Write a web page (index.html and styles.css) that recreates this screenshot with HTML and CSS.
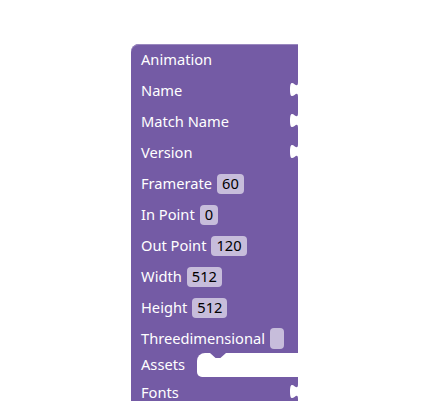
FILE: index.html
```html
<!DOCTYPE html>
<html>
<head>
<meta charset="utf-8">
<link rel="stylesheet" href="styles.css">
</head>
<body>
<div class="block">
  <div class="row"><span class="label">Animation</span></div>
  <div class="row"><span class="label">Name</span><svg class="notch" width="10" height="16" viewBox="0 0 10 16"><path d="M9,0 c0,10 -8,-8 -8,7.5 s8,-2.5 8,7.5 L10,15 L10,0 Z" fill="#fff"/></svg></div>
  <div class="row"><span class="label">Match Name</span><svg class="notch" width="10" height="16" viewBox="0 0 10 16"><path d="M9,0 c0,10 -8,-8 -8,7.5 s8,-2.5 8,7.5 L10,15 L10,0 Z" fill="#fff"/></svg></div>
  <div class="row"><span class="label">Version</span><svg class="notch" width="10" height="16" viewBox="0 0 10 16"><path d="M9,0 c0,10 -8,-8 -8,7.5 s8,-2.5 8,7.5 L10,15 L10,0 Z" fill="#fff"/></svg></div>
  <div class="row"><span class="label">Framerate</span><span class="field">60</span></div>
  <div class="row"><span class="label">In Point</span><span class="field">0</span></div>
  <div class="row"><span class="label">Out Point</span><span class="field">120</span></div>
  <div class="row"><span class="label">Width</span><span class="field">512</span></div>
  <div class="row"><span class="label">Height</span><span class="field">512</span></div>
  <div class="row"><span class="label">Threedimensional</span><span class="check"></span></div>
  <div class="row stmt"><span class="label">Assets</span><span class="slot"></span></div>
  <div class="row"><span class="label">Fonts</span><svg class="notch" width="10" height="16" viewBox="0 0 10 16"><path d="M9,0 c0,10 -8,-8 -8,7.5 s8,-2.5 8,7.5 L10,15 L10,0 Z" fill="#fff"/></svg></div>
</div>
</body>
</html>
```

FILE: styles.css
```css
html, body {
  margin: 0;
  padding: 0;
  background: #ffffff;
  overflow: hidden;
}
body {
  font-family: "Noto Sans", "DejaVu Sans", sans-serif;
  font-size: 14.67px;
}
.block {
  margin-top: 44px;
  margin-left: 131px;
  width: 167px;
  background: #745ba5;
  border-top-left-radius: 8px;
  box-shadow: inset 0 1px 0 #9a88bf;
  display: flex;
  flex-direction: column;
}
.row {
  position: relative;
  height: 31px;
  display: flex;
  align-items: center;
  gap: 5px;
  padding-left: 10px;
}
.label {
  color: #ffffff;
  white-space: nowrap;
  line-height: 1;
}
.field {
  height: 20px;
  padding: 0 5px;
  border-radius: 4px;
  background: #c7bddb;
  color: #000000;
  display: flex;
  align-items: center;
  line-height: 1;
}
.check {
  width: 14px;
  height: 21px;
  border-radius: 4px;
  background: #c7bddb;
}
.notch {
  position: absolute;
  right: -1px;
  top: 7px;
}
.stmt {
  height: 23px;
  align-items: stretch;
  gap: 12px;
}
.stmt .label {
  align-self: center;
  margin-top: -3px;
}
.slot {
  position: relative;
  flex: 1;
  background: #ffffff;
  border-radius: 8px 0 0 5px;
  margin-top: -1px;
}
.slot::before {
  content: "";
  position: absolute;
  left: 13px;
  top: 0;
  width: 16px;
  height: 5px;
  background: #745ba5;
  clip-path: polygon(0 0, 100% 0, 65% 100%, 35% 100%);
}
```
